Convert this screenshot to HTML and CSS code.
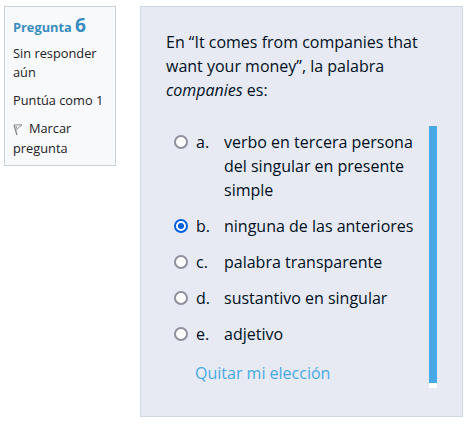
FILE: index.html
```html
<!DOCTYPE html>
<html lang="es">
<head>
<meta charset="utf-8">
<title>Pregunta 6</title>
<link rel="stylesheet" href="styles.css">
</head>
<body>
<main class="question">
  <aside class="info">
    <h3 class="number">Pregunta <span class="digit">6</span></h3>
    <p class="state">Sin responder aún</p>
    <p class="grade">Puntúa como 1</p>
    <p class="flag"><svg class="flag-icon" width="10" height="13" viewBox="0 0 10 13"><path d="M1 2L4 12" fill="none" stroke="#888" stroke-width="1.3"/><path d="M1 2L9 1.8L3.2 6.8M3 3.2L4.2 5.8" fill="none" stroke="#909090" stroke-width="1"/></svg>Marcar pregunta</p>
  </aside>
  <section class="content">
    <p class="text">En “It comes from companies that want your money”, la palabra <em>companies</em> es:</p>
    <div class="answers">
      <label class="option"><span class="radio"></span><span class="letter">a.</span><span class="label">verbo en tercera persona del singular en presente simple</span></label>
      <label class="option"><span class="radio checked"></span><span class="letter">b.</span><span class="label">ninguna de las anteriores</span></label>
      <label class="option"><span class="radio"></span><span class="letter">c.</span><span class="label">palabra transparente</span></label>
      <label class="option"><span class="radio"></span><span class="letter">d.</span><span class="label">sustantivo en singular</span></label>
      <label class="option"><span class="radio"></span><span class="letter">e.</span><span class="label">adjetivo</span></label>
      <a class="clear">Quitar mi elección</a>
    </div>
  </section>
</main>
</body>
</html>
```
FILE: styles.css
```css
* { box-sizing: border-box; }
body {
  margin: 0;
  background: #fff;
  color: #1d2125;
  font: 16px/24px "Open Sans", "Noto Sans", sans-serif;
}
p, h3 { margin: 0; }
.question {
  display: flex;
  align-items: flex-start;
  gap: 24px;
  padding: 6px 5px 0 4px;
}
.info {
  flex: none;
  width: 112px;
  height: 160px;
  padding: 8px;
  border: 1px solid #cad0d7;
  background: #f8f9fb;
  font-size: 12.8px;
  line-height: 19px;
}
.number { height: 20px; font-size: 12.8px; line-height: 20px; color: #3a8dbf; }
.digit { font-size: 19.2px; }
.state { height: 38px; margin-top: 9px; }
.grade { margin-top: 9px; }
.flag { margin-top: 8px; line-height: 20px; }
.flag-icon { margin-right: 6px; vertical-align: -3px; }
.content {
  flex: none;
  width: 323px;
  height: 411px;
  padding: 23px 25px 0;
  border: 1px solid #cbd8e5;
  background: #e7eaf2;
  color: #00101e;
}
.answers {
  width: 271px;
  height: 262px;
  margin-top: 24px;
  padding: 4px 8px 0 0;
  background: linear-gradient(#47a9e6 257px, #fff 257px) right / 8px 100% no-repeat;
}
.option { display: flex; margin-bottom: 12px; }
.radio {
  flex: none;
  width: 14px;
  height: 14px;
  margin: 5px 8px 0;
  border: 2px solid #8f8f9d;
  border-radius: 50%;
  background: #fff;
}
.checked { border-color: #0060df; background: radial-gradient(circle, #0060df 2.7px, #fff 3.4px); }
.letter { flex: none; width: 28px; }
.label { flex: 1; }
.clear { display: block; margin: 15px 0 0 29px; color: #47a9e6; }
```
